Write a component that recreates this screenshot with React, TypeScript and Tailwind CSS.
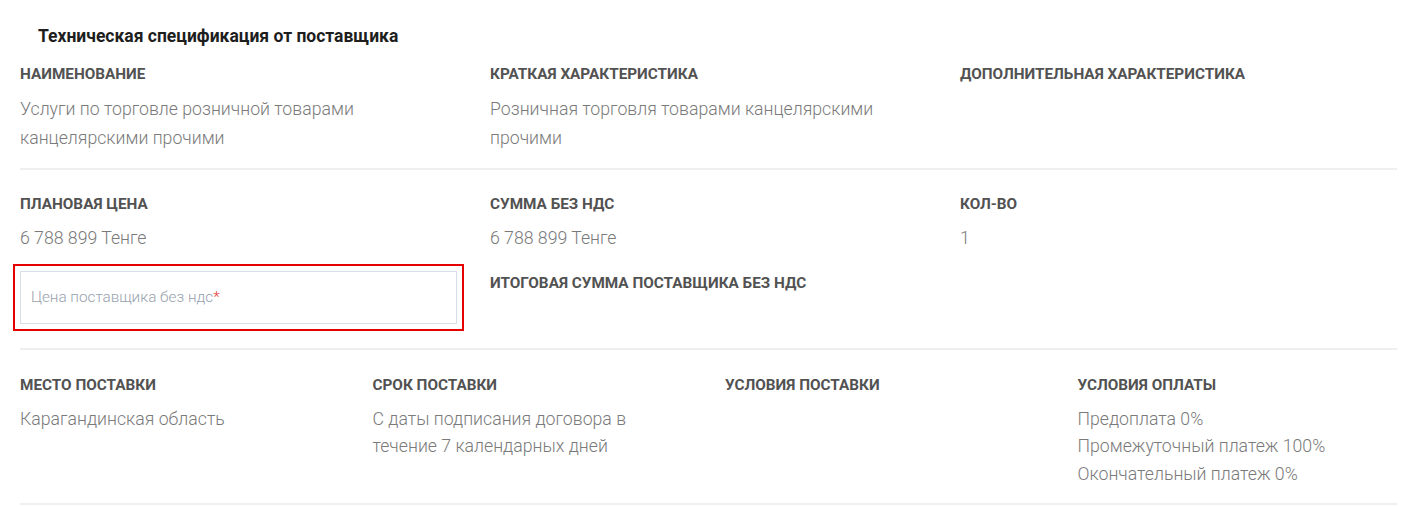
const Label = ({ children }: { children: React.ReactNode }) => (
  <div className="text-[15.3px] font-bold uppercase leading-[20px] text-[#525252]">{children}</div>
)

const Value = ({ children, tight }: { children: React.ReactNode; tight?: boolean }) => (
  <div
    className={
      tight
        ? 'mt-[11.25px] text-[17.7px] font-light leading-[27.5px] text-[#7a7a7a]'
        : 'mt-[10.5px] text-[17.7px] font-light leading-[29px] text-[#7a7a7a]'
    }
  >
    {children}
  </div>
)

export default function App() {
  return (
    <div className="min-h-screen bg-white pl-[20px] pr-[21px] font-['Roboto',sans-serif]">
      <h2 className="pl-[18px] pt-[26px] text-[17.5px] font-bold leading-[20px] text-[#1e1e1e]">
        Техническая спецификация от поставщика
      </h2>

      {/* Row 1 */}
      <div className="grid grid-cols-3 gap-x-[33px] border-b-2 border-[#efefef] pt-[18px] pb-[15.5px]">
        <div>
          <Label>Наименование</Label>
          <Value>
            Услуги по торговле розничной товарами
            <br />
            канцелярскими прочими
          </Value>
        </div>
        <div>
          <Label>Краткая характеристика</Label>
          <Value>
            Розничная торговля товарами канцелярскими
            <br />
            прочими
          </Value>
        </div>
        <div>
          <Label>Дополнительная характеристика</Label>
        </div>
      </div>

      {/* Row 2 */}
      <div className="grid grid-cols-3 gap-x-[33px] border-b-2 border-[#efefef] pt-[23.5px] pb-[24px]">
        <div>
          <Label>Плановая цена</Label>
          <Value>6 788 899 Тенге</Value>
          <div className="mt-[17.5px] flex h-[53px] items-center border border-[#d5dfe9] px-[10px] text-[15.3px] font-light text-[#98a2ad] outline-2 outline-offset-[5px] outline-[#e60000]">
            Цена поставщика без ндс<span className="text-[#e53935]">*</span>
          </div>
        </div>
        <div>
          <Label>Сумма без НДС</Label>
          <Value>6 788 899 Тенге</Value>
          <div className="mt-[19.5px]">
            <Label>Итоговая сумма поставщика без НДС</Label>
          </div>
        </div>
        <div>
          <Label>Кол-во</Label>
          <Value>1</Value>
        </div>
      </div>

      {/* Row 3 */}
      <div className="grid grid-cols-4 gap-x-[33px] border-b-2 border-[#efefef] pt-[25px] pb-[14.75px]">
        <div>
          <Label>Место поставки</Label>
          <Value tight>Карагандинская область</Value>
        </div>
        <div>
          <Label>Срок поставки</Label>
          <Value tight>
            С даты подписания договора в
            <br />
            течение 7 календарных дней
          </Value>
        </div>
        <div>
          <Label>Условия поставки</Label>
        </div>
        <div>
          <Label>Условия оплаты</Label>
          <Value tight>
            Предоплата 0%
            <br />
            Промежуточный платеж 100%
            <br />
            Окончательный платеж 0%
          </Value>
        </div>
      </div>
    </div>
  )
}
